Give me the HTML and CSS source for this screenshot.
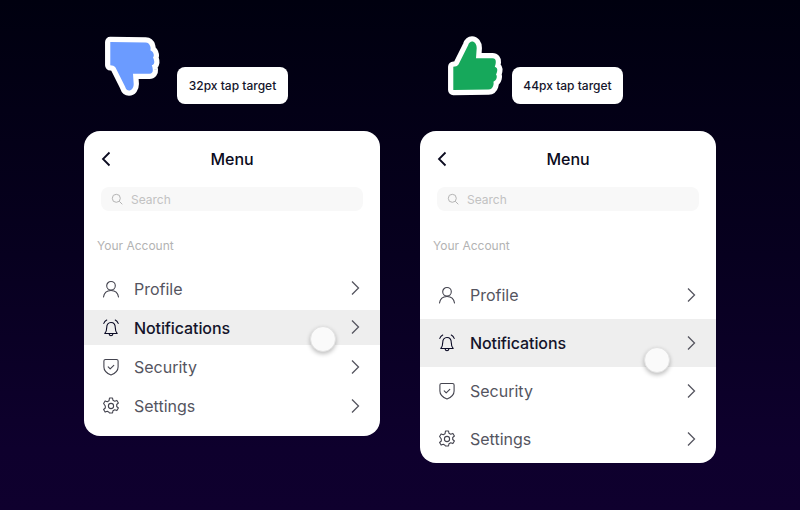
FILE: index.html
```html
<!DOCTYPE html>
<html lang="en">
<head>
  <meta charset="UTF-8">
  <meta name="viewport" content="width=device-width, initial-scale=1.0">
  <title>Tap targets</title>
  <link rel="stylesheet" href="styles.css">
</head>
<body>
  <svg class="defs" width="0" height="0">
    <defs>
      <path id="hand" d="M24 11.500C25 8.500 26.500 7.500 28 7.500C30.500 7.500 32.700 10 32.700 14L32 24.300H48.500C50.800 24.300 52 26 51.800 28C51.700 30 51.300 31.500 50.800 32.700C52.800 33.300 53.600 35 53.200 37C52.900 38.500 52.500 39.500 52 40.500C52.800 41.500 53 42.500 52.600 44C52.200 45.700 51 47 49.400 47.700C49.800 49 49.700 50.200 49.200 51.700C48.500 54 47 55.400 44.500 55.500L9.300 56V32.700C11.500 32.700 13.300 32 14.500 30.500Z"/>
      <symbol id="chev" viewBox="0 0 12 16"><path d="M3 1.500l6.500 6.500-6.500 6.500"/></symbol>
      <symbol id="user" viewBox="0 0 18 18"><circle cx="9" cy="5.800" r="4.300"/><path d="M1.500 17c.6-4 3.400-6.500 7.500-6.500s6.900 2.500 7.500 6.500"/></symbol>
      <symbol id="bell" viewBox="0 0 18 18"><path d="M2.800 14.500c1.300-1.200 1.900-2.700 1.900-5.700 0-3.300 1.700-5.300 4.300-5.300s4.300 2 4.300 5.300c0 3 .6 4.500 1.900 5.700z"/><path d="M7 14.700c.3 1.500 1 2.100 2 2.100s1.700-.6 2-2.100M1.800 4.400C2.400 2.900 3.400 1.800 4.700 1M16.200 4.400c-.6-1.500-1.600-2.600-2.900-3.400"/></symbol>
      <symbol id="shield" viewBox="0 0 18 18"><path d="M3.500 1.500h11c1 0 1.600.6 1.600 1.500v6c0 3.800-3 6.400-7.100 8C4.900 15.400 1.900 12.800 1.900 9V3c0-.9.600-1.500 1.600-1.500z"/><path d="M6.200 8.800l2 2 3.600-3.500"/></symbol>
      <symbol id="gear" viewBox="0 0 18 18"><circle cx="9" cy="9" r="2.600"/><path d="M7.500 1h3l.5 2.300 1.700.9 2.200-.8 1.500 2.600-1.700 1.500v2l1.700 1.500-1.500 2.600-2.200-.8-1.700.9-.5 2.300h-3L7 15.200l-1.700-.9-2.200.8-1.500-2.600 1.700-1.500v-2L1.600 6.500l1.500-2.600 2.200.8L7 3.800z"/></symbol>
    </defs>
  </svg>

  <div class="page">
    <section class="col col-small">
      <div class="head">
        <svg class="thumb thumb-down" width="60" height="64" viewBox="0 0 60 64"><use href="#hand"/></svg>
        <div class="tag">32px tap target</div>
      </div>
      <div class="card">
        <div class="top">
          <svg class="back" width="12" height="16" viewBox="0 0 12 16"><path d="M9.500 1.500L3 8l6.500 6.500"/></svg>
          <h1>Menu</h1>
        </div>
        <div class="search">
          <svg width="12" height="12" viewBox="0 0 12 12"><circle cx="5.300" cy="5.300" r="4"/><path d="M8.300 8.300l3 3"/></svg>
          <span>Search</span>
        </div>
        <div class="section">Your Account</div>
        <div class="rows">
          <div class="row">
            <svg class="ico"><use href="#user"/></svg>
            <span>Profile</span>
            <svg class="chev"><use href="#chev"/></svg>
          </div>
          <div class="row active">
            <svg class="ico"><use href="#bell"/></svg>
            <span>Notifications</span>
            <svg class="chev"><use href="#chev"/></svg>
            <div class="touch"></div>
          </div>
          <div class="row">
            <svg class="ico"><use href="#shield"/></svg>
            <span>Security</span>
            <svg class="chev"><use href="#chev"/></svg>
          </div>
          <div class="row">
            <svg class="ico"><use href="#gear"/></svg>
            <span>Settings</span>
            <svg class="chev"><use href="#chev"/></svg>
          </div>
        </div>
      </div>
    </section>

    <section class="col col-large">
      <div class="head">
        <svg class="thumb thumb-up" width="60" height="64" viewBox="0 0 60 64"><use href="#hand"/></svg>
        <div class="tag">44px tap target</div>
      </div>
      <div class="card">
        <div class="top">
          <svg class="back" width="12" height="16" viewBox="0 0 12 16"><path d="M9.500 1.500L3 8l6.500 6.500"/></svg>
          <h1>Menu</h1>
        </div>
        <div class="search">
          <svg width="12" height="12" viewBox="0 0 12 12"><circle cx="5.300" cy="5.300" r="4"/><path d="M8.300 8.300l3 3"/></svg>
          <span>Search</span>
        </div>
        <div class="section">Your Account</div>
        <div class="rows">
          <div class="row">
            <svg class="ico"><use href="#user"/></svg>
            <span>Profile</span>
            <svg class="chev"><use href="#chev"/></svg>
          </div>
          <div class="row active">
            <svg class="ico"><use href="#bell"/></svg>
            <span>Notifications</span>
            <svg class="chev"><use href="#chev"/></svg>
            <div class="touch"></div>
          </div>
          <div class="row">
            <svg class="ico"><use href="#shield"/></svg>
            <span>Security</span>
            <svg class="chev"><use href="#chev"/></svg>
          </div>
          <div class="row">
            <svg class="ico"><use href="#gear"/></svg>
            <span>Settings</span>
            <svg class="chev"><use href="#chev"/></svg>
          </div>
        </div>
      </div>
    </section>
  </div>
</body>
</html>
```

FILE: styles.css
```css
* { box-sizing: border-box; }
html, body { height: 100%; }
body { margin: 0; font-family: Inter, "Liberation Sans", sans-serif; background: linear-gradient(180deg, #00000f 0%, #07001f 50%, #0e002d 88%, #0f002e 100%); overflow: hidden; }
.defs { position: absolute; }
.page { display: flex; gap: 40px; padding: 34px 0 0 84px; }
.col { width: 296px; }

.head { display: flex; align-items: flex-start; height: 70px; margin-bottom: 27px; }
.col-small .head { padding-left: 17px; gap: 16px; }
.col-large .head { padding-left: 24px; gap: 8px; }
.thumb use { stroke: #fff; stroke-width: 10.500px; stroke-linejoin: round; paint-order: stroke; }
.thumb-down { fill: #6b9bff; transform: scaleY(-1); }
.thumb-up { fill: #16a85b; }
.tag { margin-top: 33px; width: 111px; height: 37px; border-radius: 8px; background: #fff; color: #14142b; font-size: 12px; font-weight: 500; line-height: 37px; text-align: center; }

.card { background: #fff; border-radius: 16px; overflow: hidden; padding-top: 14px; }
.col-small .card { padding-bottom: 12px; }
.top { position: relative; height: 28px; display: flex; align-items: center; justify-content: center; }
.top h1 { margin: 0; font-size: 16px; font-weight: 500; color: #0b0b20; }
.back { position: absolute; left: 16px; top: 6px; fill: none; stroke: #0b0b20; stroke-width: 1.800; }
.search { margin: 14px 17px 0; height: 24px; border-radius: 8px; background: #f8f8f8; display: flex; align-items: center; gap: 8px; padding-left: 10px; color: #c2c2c2; font-size: 12px; }
.search svg { fill: none; stroke: #b4b4b4; stroke-width: 1; }
.section { margin: 28px 0 18px 13px; height: 14px; line-height: 14px; font-size: 12px; color: #b3b3b3; }

.rows { display: flex; flex-direction: column; }
.col-small .rows { gap: 4.300px; }
.row { position: relative; display: flex; align-items: center; gap: 14px; padding: 0 19px 0 18px; color: #55555f; font-size: 16px; }
.col-small .row { height: 35px; }
.col-large .row { height: 48px; }
.row span { flex: 1; }
.row.active { background: #eeeeee; color: #14142a; font-weight: 500; letter-spacing: -.1px; }
.ico { width: 18px; height: 18px; fill: none; stroke: #44444f; stroke-width: 1.100; stroke-linejoin: round; stroke-linecap: round; }
.row.active .ico { stroke: #0b0b25; }
.chev { width: 12px; height: 16px; margin-top: -1px; fill: none; stroke: #55555f; stroke-width: 1.300; }
.touch { position: absolute; width: 26px; height: 26px; border-radius: 50%; background: #fafafa; border: 1px solid #e2e2e2; box-shadow: 0 2px 4px rgba(0, 0, 0, .25); }
.col-small .touch { left: 226px; top: 16px; }
.col-large .touch { left: 224px; top: 28px; }
```
